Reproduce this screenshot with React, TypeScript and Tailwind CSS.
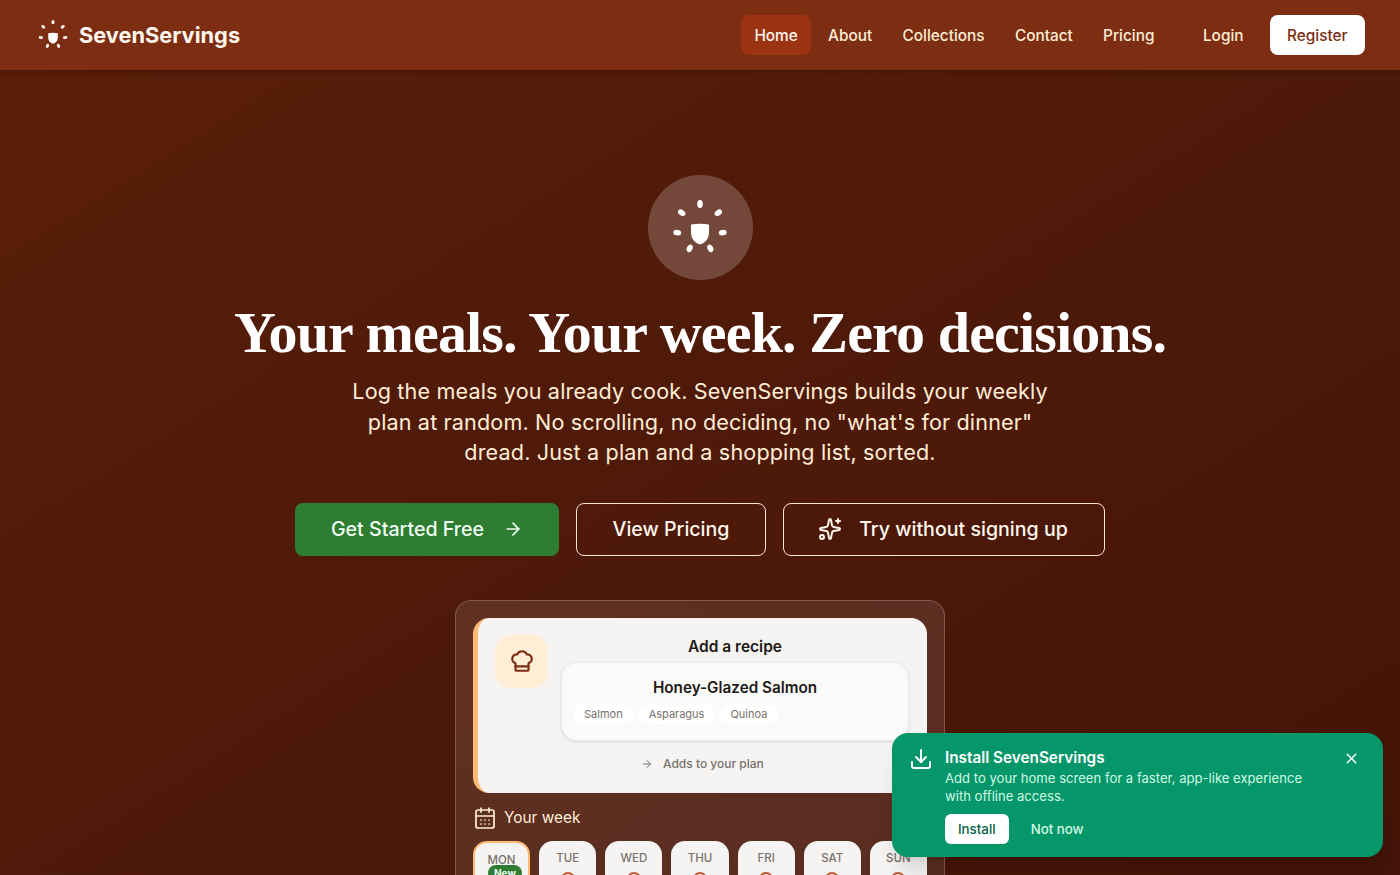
import { ArrowRight, CalendarDays, ChefHat, Download, Sparkles, X } from "lucide-react";

const navLinks = ["About", "Collections", "Contact", "Pricing"];
const days = ["TUE", "WED", "THU", "FRI", "SAT", "SUN"];
const ingredients = ["Salmon", "Asparagus", "Quinoa"];

function Logo({ className }: { className: string }) {
    return (
        <svg viewBox="0 0 60 60" fill="white" className={className}>
            <path d="M21 26.5 Q30 25 39 26.5 L39 34 C39 41 35 45 30 46.5 C25 45 21 41 21 34 Z" />
            <ellipse cx="30" cy="6" rx="2.8" ry="4" />
            <ellipse cx="11.7" cy="14.7" rx="2.8" ry="4" transform="rotate(-55 11.7 14.7)" />
            <ellipse cx="48.3" cy="14.7" rx="2.8" ry="4" transform="rotate(55 48.3 14.7)" />
            <ellipse cx="7.3" cy="34.7" rx="2.8" ry="4" transform="rotate(-85 7.3 34.7)" />
            <ellipse cx="52.7" cy="34.7" rx="2.8" ry="4" transform="rotate(85 52.7 34.7)" />
            <ellipse cx="19.7" cy="50.3" rx="2.8" ry="4" transform="rotate(25 19.7 50.3)" />
            <ellipse cx="40.3" cy="50.3" rx="2.8" ry="4" transform="rotate(-25 40.3 50.3)" />
        </svg>
    );
}

function DayCard({ label }: { label: string }) {
    return (
        <div className="flex h-[60px] flex-col items-center rounded-t-[14px] bg-[#f5f4f3] pt-[9px]">
            <span className="text-[11.5px] leading-4 font-medium text-[#78716c]">{label}</span>
            <span className="mt-[6px] h-[14px] w-[14px] rounded-full border-2 border-[#c2552e]" />
        </div>
    );
}

export default function App() {
    return (
        <div className="relative h-[875px] overflow-hidden bg-gradient-to-br from-[#5a1f0a] to-[#431407] font-['Inter',sans-serif] text-white">
            <header className="flex h-[70px] items-center justify-between bg-[#7c2d12] pr-[35px] pl-[37px] shadow-md">
                <div className="flex items-center gap-[10px]">
                    <Logo className="h-[32px] w-[32px]" />
                    <span className="text-[21.8px] font-bold text-[#fff7ed]">SevenServings</span>
                </div>
                <nav className="flex items-center text-[15.36px] font-medium text-[#ffedd5]">
                    <a className="rounded-lg bg-[#9a3412] px-[13px] pt-[9px] pb-[7px] leading-6 text-[#fff7ed]">Home</a>
                    {navLinks.map((link) => (
                        <a key={link} className="ml-[4.3px] px-[13px] pt-[9px] pb-[7px] leading-6">{link}</a>
                    ))}
                    <a className="ml-[22.5px] px-[13px] pt-[9px] pb-[7px] leading-6">Login</a>
                    <a className="ml-[13px] rounded-lg bg-white px-[17.5px] pt-[9px] pb-[7px] leading-6 text-[#7c2d12]">Register</a>
                </nav>
            </header>

            <main className="flex flex-col items-center pt-[105px]">
                <div className="flex h-[105px] w-[105px] items-center justify-center rounded-full bg-white/20">
                    <Logo className="h-[60px] w-[60px]" />
                </div>
                <h1 className="mt-[18px] font-['Liberation_Serif',serif] text-[58px] leading-[70px] font-bold tracking-[-0.85px] whitespace-nowrap">
                    Your meals. Your week. Zero decisions.
                </h1>
                <p className="mt-[8px] w-[720px] text-center text-[21.6px] leading-[30.6px] tracking-[0.14px] text-[#ffedd5]">
                    Log the meals you already cook. SevenServings builds your weekly plan at random. No scrolling, no deciding, no "what's for dinner" dread. Just a plan and a shopping list, sorted.
                </p>

                <div className="mt-[35px] flex gap-[17px] text-[19.6px] font-medium">
                    <a className="flex h-[53px] w-[264px] items-center justify-center gap-[19px] rounded-lg bg-[#2e7d32] text-[#f0fdf4]">
                        Get Started Free
                        <ArrowRight size={20} />
                    </a>
                    <a className="flex h-[53px] w-[190px] items-center justify-center rounded-lg border border-[#ffe4d6] text-[#fff7ed]">
                        View Pricing
                    </a>
                    <a className="flex h-[53px] w-[322px] items-center justify-center gap-[17px] rounded-lg border border-[#ffe4d6] pr-[2px] text-[#fff7ed]">
                        <Sparkles size={24} />
                        Try without signing up
                    </a>
                </div>

                <div className="mt-[44px] w-[490px] rounded-t-2xl border border-white/20 bg-white/10 px-[17px] pt-[17px]">
                    <div className="flex h-[175px] gap-[13px] rounded-2xl border-l-[5px] border-[#fdba74] bg-[#f5f4f3] pt-[17px] pr-[18px] pl-[17px]">
                        <div className="flex h-[53px] w-[53px] shrink-0 items-center justify-center rounded-2xl bg-[#ffedd5]">
                            <ChefHat size={26} className="text-[#7c2d12]" />
                        </div>
                        <div className="flex flex-1 flex-col items-center pt-[1px]">
                            <span className="text-[15.5px] leading-[22px] font-semibold text-[#1c1917]">Add a recipe</span>
                            <div className="mt-[4px] flex h-[79px] w-full flex-col items-center rounded-2xl border border-[#eeeceb] bg-[#fafaf9] pt-[14px] shadow-sm">
                                <span className="text-[15.25px] leading-[22px] font-semibold text-[#1c1917]">Honey-Glazed Salmon</span>
                                <div className="mt-[5.5px] flex w-full gap-[4px] pl-[11px]">
                                    {ingredients.map((item) => (
                                        <span key={item} className="rounded-full bg-white px-[11px] text-[11px] leading-[20px] text-[#78716c]">{item}</span>
                                    ))}
                                </div>
                            </div>
                            <div className="mt-[13px] ml-[80px] flex items-center gap-[10px] self-start text-xs leading-5 font-medium text-[#78716c]">
                                <ArrowRight size={12} />
                                Adds to your plan
                            </div>
                        </div>
                    </div>

                    <div className="mt-[13px] flex items-center gap-[7px] text-[#ffedd5]">
                        <CalendarDays size={24} strokeWidth={1.7} />
                        <span className="text-[15.4px] leading-6">Your week</span>
                    </div>

                    <div className="mt-[11px] grid grid-cols-7 gap-[9px]">
                        <div className="relative flex h-[60px] flex-col items-center rounded-t-[14px] border-2 border-[#fdba74] bg-[#f5f4f3] pt-[9px]">
                            <span className="text-[11.5px] leading-4 font-medium text-[#78716c]">MON</span>
                            <span className="absolute top-[22px] left-[13px] rounded-full bg-[#2e7d32] px-[6px] text-[10px] leading-4 font-bold text-[#f0fdf4]">New</span>
                        </div>
                        {days.map((day) => (
                            <DayCard key={day} label={day} />
                        ))}
                    </div>
                </div>
            </main>

            <div className="absolute right-[17px] bottom-[18px] flex h-[124px] w-[491px] gap-[12px] rounded-2xl bg-[#059669] pt-[14px] pr-[23px] pl-[17px] shadow-xl">
                <Download size={24} className="shrink-0" />
                <div className="flex-1 pt-[1px]">
                    <p className="text-[15.3px] leading-5 font-semibold">Install SevenServings</p>
                    <p className="mt-[2px] text-[13.1px] leading-[17.5px] text-[#d1fae5]">
                        Add to your home screen for a faster, app-like experience with offline access.
                    </p>
                    <div className="mt-[9px] flex items-center gap-[22px] text-[13.3px] font-medium">
                        <a className="rounded-md bg-white px-[13px] py-[6px] leading-[18px] text-[#065f46]">Install</a>
                        <a className="leading-5 text-[#d1fae5]">Not now</a>
                    </div>
                </div>
                <X size={17} className="mt-[3px] shrink-0" />
            </div>
        </div>
    );
}
